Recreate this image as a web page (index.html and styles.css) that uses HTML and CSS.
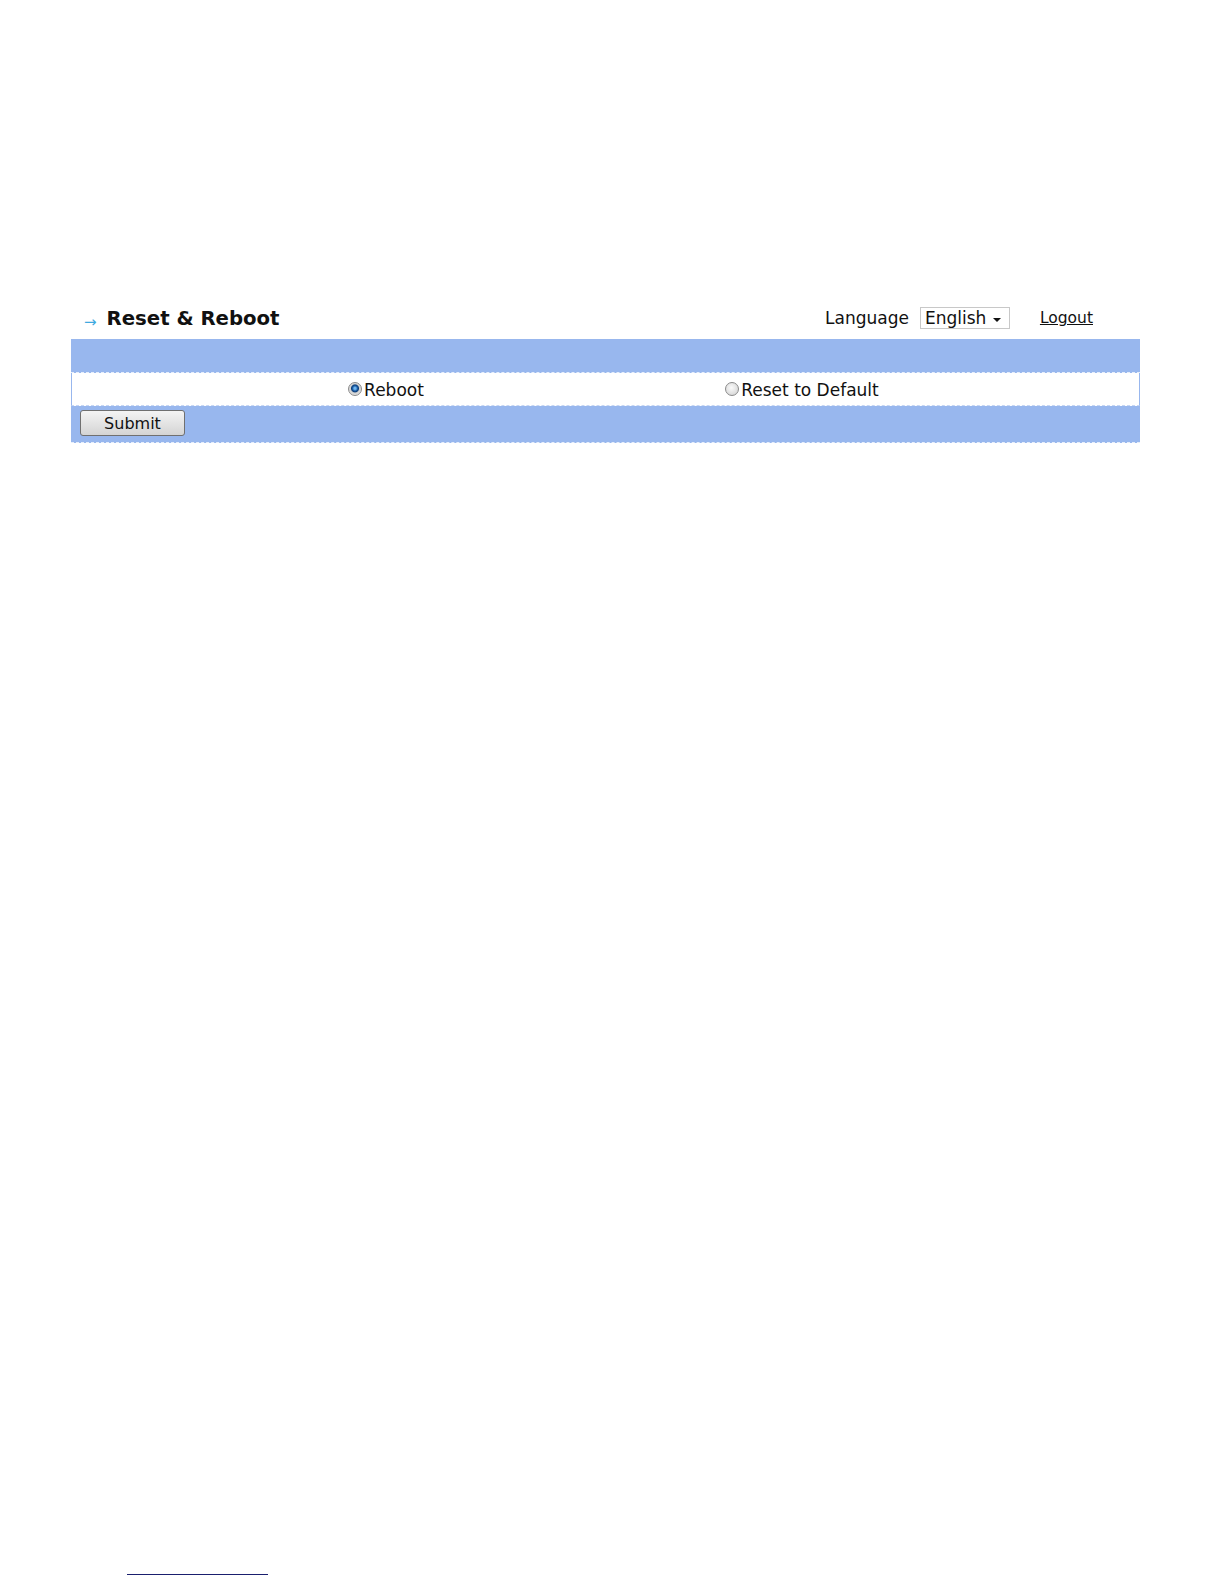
FILE: index.html
```html
<!DOCTYPE html>
<html>
<head>
<meta charset="utf-8">
<link rel="stylesheet" href="styles.css">
</head>
<body>
<div class="page">
  <div class="header">
    <div class="title">
      <span class="arrow">&rarr;</span>
      <h1>Reset &amp; Reboot</h1>
    </div>
    <div class="tools">
      <span class="lang-label">Language</span>
      <div class="select">English <span class="caret"></span></div>
      <a class="logout" href="#">Logout</a>
    </div>
  </div>
  <div class="panel">
    <div class="row blue top"></div>
    <div class="row white options">
      <div></div>
      <label class="opt"><span class="radio checked"></span>Reboot</label>
      <label class="opt"><span class="radio"></span>Reset to Default</label>
      <div></div>
    </div>
    <div class="row blue bottom">
      <button class="submit">Submit</button>
    </div>
  </div>
  <div class="spacer"></div>
  <div class="footline"></div>
</div>
</body>
</html>
```
FILE: styles.css
```css
html, body {
  margin: 0;
  padding: 0;
  background: #fff;
}
.page {
  height: 1584px;
  display: flex;
  flex-direction: column;
  font-family: "DejaVu Sans", Verdana, sans-serif;
  color: #111;
  box-sizing: border-box;
  padding-top: 302px;
}
.header {
  display: flex;
  justify-content: space-between;
  align-items: center;
  margin: 0 131px 0 84px;
  height: 32px;
}
.title {
  display: flex;
  align-items: center;
  gap: 10px;
}
.arrow {
  color: #3fa9e0;
  font-size: 15px;
  padding-top: 8px;
}
h1 {
  margin: 0;
  font-size: 19.7px;
  font-weight: bold;
  font-family: "DejaVu Sans", Verdana, sans-serif;
}
.tools {
  display: flex;
  align-items: center;
  font-size: 17px;
}
.lang-label {
  margin-right: 11px;
}
.select {
  border: 1px solid #c8c8c8;
  height: 20px;
  width: 84px;
  padding-left: 4px;
  display: flex;
  align-items: center;
  position: relative;
}
.caret {
  position: absolute;
  right: 8px;
  top: 10px;
  width: 0;
  height: 0;
  border-left: 4px solid transparent;
  border-right: 4px solid transparent;
  border-top: 4px solid #111;
}
.logout {
  color: #111;
  margin-left: 30px;
  font-size: 15.5px;
  text-decoration: underline;
}
.panel {
  margin: 5px 84px 0 71px;
  width: 1069px;
}
.row {
  box-sizing: border-box;
}
.blue {
  background: #98b7ee;
}
.top {
  height: 34px;
  border-bottom: 1px dashed #e6eefb;
}
.white {
  background: #fff;
  height: 33px;
  border-bottom: 1px dashed #c6d6f3;
  border-left: 1px solid #98b7ee;
  border-right: 1px solid #98b7ee;
}
.options {
  display: grid;
  grid-template-columns: 106px 416px 416px 1fr;
  align-items: center;
  font-size: 17px;
  padding-top: 2px;
}
.opt {
  display: flex;
  justify-content: center;
  align-items: center;
}
.radio {
  width: 14px;
  height: 14px;
  border-radius: 50%;
  box-sizing: border-box;
  border: 1px solid #8a8a8a;
  background: radial-gradient(circle at 45% 40%, #fafafa, #cfcfcf);
  margin-right: 2px;
  margin-top: -3px;
}
.radio.checked {
  background: radial-gradient(circle at 50% 45%, #6fb6f0 0 1px, #1d5fa8 2.5px, #0c3e7a 3.5px, #d0d0d0 4.5px, #f6f6f6);
}
.bottom {
  height: 37px;
  display: flex;
  align-items: center;
  padding-left: 9px;
  border-bottom: 1px dashed #e6eefb;
}
.submit {
  width: 105px;
  height: 26px;
  font-family: "DejaVu Sans", Verdana, sans-serif;
  font-size: 16px;
  color: #111;
  border: 1px solid #707070;
  border-radius: 3px;
  background: linear-gradient(#f4f4f4, #e4e4e4 50%, #d4d4d4);
  padding: 0;
  margin-top: -2px;
}
.spacer {
  flex: 1;
}
.footline {
  margin-left: 127px;
  width: 141px;
  height: 1px;
  background: #1a1f6e;
  margin-bottom: 9px;
}
```
